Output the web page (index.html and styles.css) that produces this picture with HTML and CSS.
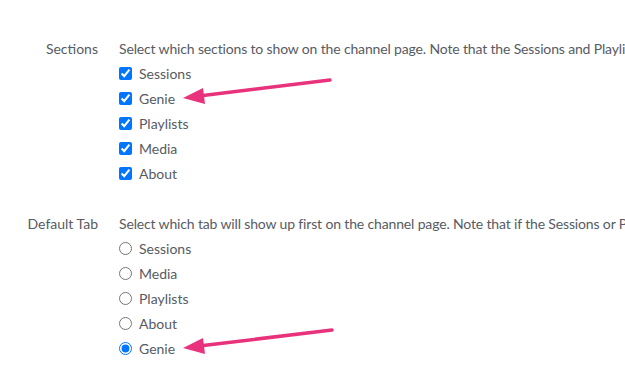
FILE: index.html
```html
<!doctype html>
<html lang="en">
<head>
  <meta charset="UTF-8">
  <title>Channel settings</title>
  <link rel="stylesheet" href="styles.css">
</head>
<body>
  <main class="settings">
    <div class="settings--row">
      <div class="settings--label">Sections</div>
      <div class="settings--field">
        <p class="settings--hint">Select which sections to show on the channel page. Note that the Sessions and Playlists sections are always shown.</p>
        <label class="option"><input type="checkbox" checked> Sessions</label>
        <label class="option"><input type="checkbox" checked> Genie</label>
        <label class="option"><input type="checkbox" checked> Playlists</label>
        <label class="option"><input type="checkbox" checked> Media</label>
        <label class="option"><input type="checkbox" checked> About</label>
      </div>
    </div>
    <div class="settings--row">
      <div class="settings--label">Default Tab</div>
      <div class="settings--field">
        <p class="settings--hint">Select which tab will show up first on the channel page. Note that if the Sessions or Playlists tab is hidden.</p>
        <label class="option"><input type="radio" name="tab"> Sessions</label>
        <label class="option"><input type="radio" name="tab"> Media</label>
        <label class="option"><input type="radio" name="tab"> Playlists</label>
        <label class="option"><input type="radio" name="tab"> About</label>
        <label class="option"><input type="radio" name="tab" checked> Genie</label>
      </div>
    </div>
  </main>

  <svg class="arrow arrow__first" width="160" height="30" viewBox="0 0 160 30">
    <line x1="149" y1="3" x2="18" y2="19" stroke="#e8327c" stroke-width="3.5" stroke-linecap="round"/>
    <polygon points="2,21 22,11 24,27" fill="#e8327c"/>
  </svg>
  <svg class="arrow arrow__second" width="160" height="30" viewBox="0 0 160 30">
    <line x1="151" y1="3" x2="18" y2="19" stroke="#e8327c" stroke-width="3.5" stroke-linecap="round"/>
    <polygon points="2,21 22,11 24,27" fill="#e8327c"/>
  </svg>
</body>
</html>
```

FILE: styles.css
```css
body {
  margin: 0;
  background-color: #fff;
  color: #575b63;
  font-family: Lato, "Liberation Sans", sans-serif;
  font-size: 14px;
  overflow: hidden;
  position: relative;
}

.settings {
  padding-top: 36px;
  display: flex;
  flex-direction: column;
  gap: 25px;
}

.settings--row {
  display: flex;
  gap: 21px;
}

.settings--label {
  width: 98px;
  flex-shrink: 0;
  text-align: right;
  line-height: 25px;
}

.settings--field {
  display: flex;
  flex-direction: column;
  min-width: 0;
  overflow: hidden;
}

.settings--hint {
  margin: 0;
  line-height: 25px;
  white-space: nowrap;
  letter-spacing: -0.15px;
}

.option {
  display: flex;
  align-items: center;
  gap: 7px;
  height: 25px;
}

.option > input {
  margin: 0;
  width: 13px;
  height: 13px;
  accent-color: #0075ff;
}

.arrow {
  position: absolute;
  left: 181px;
}

.arrow__first {
  top: 77px;
}

.arrow__second {
  top: 327px;
}
```
